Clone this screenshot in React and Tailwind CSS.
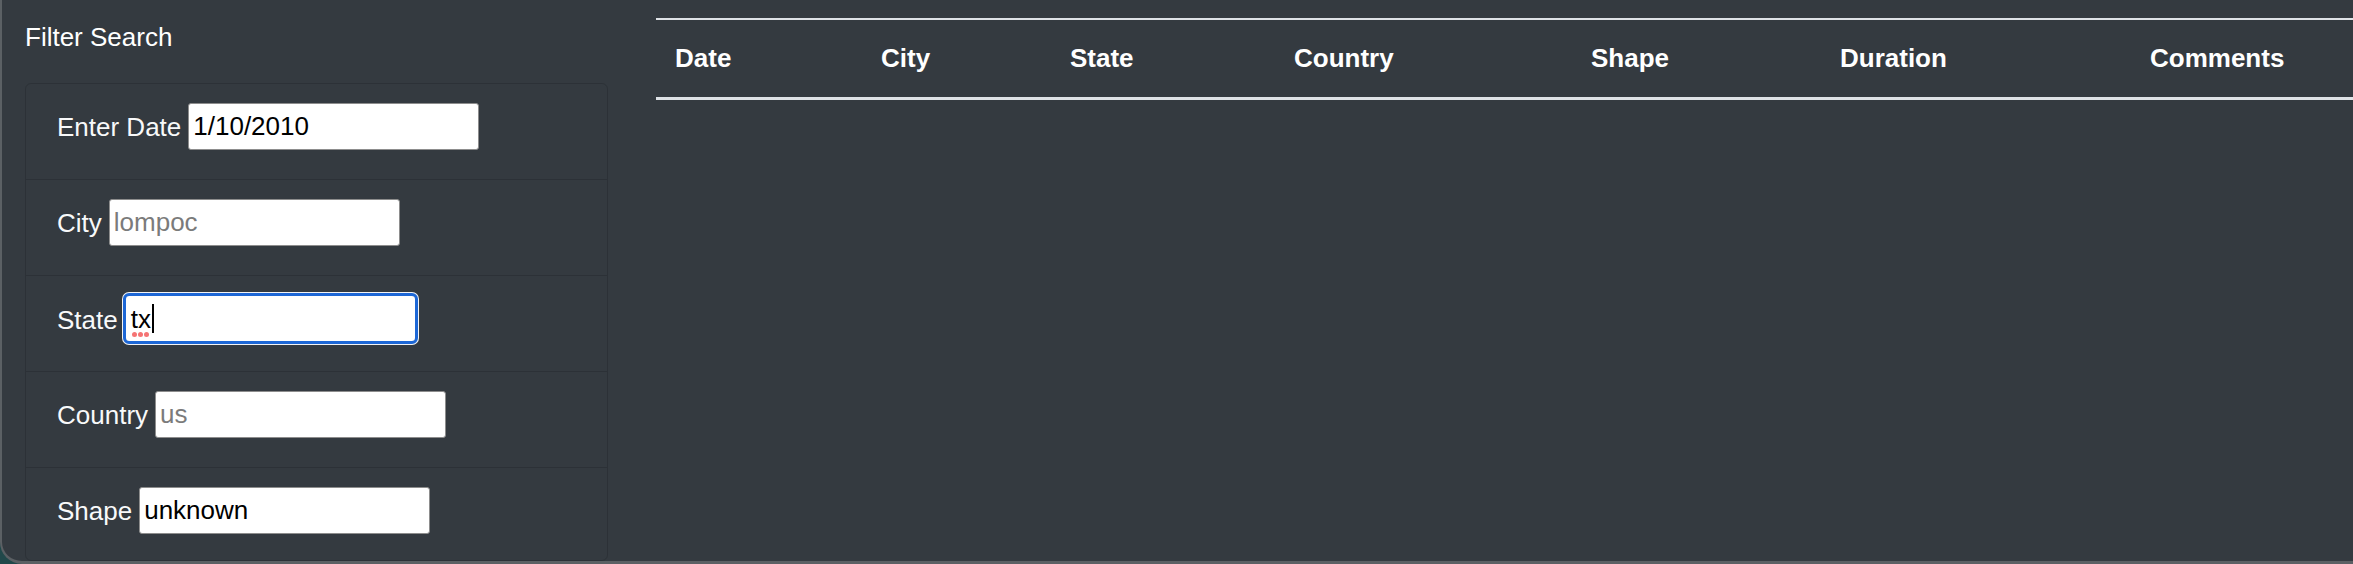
import React from 'react'

const fields = [
  { label: 'Enter Date', value: '1/10/2010' },
  { label: 'City', placeholder: 'lompoc' },
  { label: 'State', focused: true, value: 'tx' },
  { label: 'Country', placeholder: 'us' },
  { label: 'Shape', value: 'unknown' },
]

const columns = [
  { name: 'Date', w: 'w-[206px]' },
  { name: 'City', w: 'w-[189px]' },
  { name: 'State', w: 'w-[224px]' },
  { name: 'Country', w: 'w-[297px]' },
  { name: 'Shape', w: 'w-[249px]' },
  { name: 'Duration', w: 'w-[310px]' },
  { name: 'Comments', w: '' },
]

/* the focused field, drawn by hand so the caret and spell marks stay put */
function FocusedInput({ value }) {
  return (
    <div className="relative flex items-center w-[291px] h-[47px] px-[5px] bg-white border border-[#d8d8d8] rounded-[4px] shadow-[0_0_0_3px_#f4f4f4] outline-[3px] outline-solid outline-[#1d67d6] outline-offset-[-1px] text-black">
      <span className="relative leading-none">
        {value}
        <span className="absolute left-[1px] top-[26px] flex gap-[1px]">
          <span className="w-[5px] h-[5px] rounded-full bg-[#f57474]" />
          <span className="w-[5px] h-[5px] rounded-full bg-[#f57474]" />
          <span className="w-[5px] h-[5px] rounded-full bg-[#f57474]" />
        </span>
      </span>
      <span className="w-[2px] h-[29px] bg-black ml-[1px]" />
    </div>
  )
}

function FieldRow({ field, last }) {
  return (
    <div
      className={`flex items-baseline gap-[7px] pl-[31px] pt-[19px] shrink-0 ${
        last ? 'flex-1' : 'h-[96px] border-b border-black/[0.14]'
      }`}
    >
      <label className="text-[#f8f9fa] relative top-[1px]">{field.label}</label>
      {field.focused ? (
        <FocusedInput value={field.value} />
      ) : (
        <input
          readOnly
          defaultValue={field.value}
          placeholder={field.placeholder}
          className="w-[291px] h-[47px] px-[4px] bg-white text-black border border-[#8d8d8d] rounded-[3px] placeholder:text-[#7b7b7b] outline-none"
        />
      )}
    </div>
  )
}

export default function App() {
  return (
    <div className="w-[2353px] h-[564px] bg-[#21484a] overflow-hidden font-['Liberation_Sans',Arial,sans-serif] text-[26px] leading-[39px]">
      <div className="flex h-full bg-[#343a40] border-l-2 border-b-[3px] border-[#5b6064] rounded-bl-[22px] overflow-hidden">

        {/* filter panel */}
        <div className="w-[630px] shrink-0 flex flex-col pl-[23px] pt-[18px]">
          <h2 className="text-white mb-[26px]">Filter Search</h2>

          <div className="w-[583px] flex-1 min-h-0 flex flex-col border border-black/[0.14] rounded-[6px] overflow-hidden">
            {fields.map((f, i) => (
              <FieldRow key={f.label} field={f} last={i === fields.length - 1} />
            ))}
          </div>
        </div>

        {/* results table */}
        <div className="flex-1 pl-[24px] pt-[18px]">
          <table className="w-full table-fixed">
            <colgroup>
              {columns.map((c) => (
                <col key={c.name} className={c.w} />
              ))}
            </colgroup>
            <thead>
              <tr>
                {columns.map((c) => (
                  <th
                    key={c.name}
                    className="text-left font-bold text-white px-[19px] py-[19px] border-t-2 border-b-[3px] border-[#dee2e6]"
                  >
                    {c.name}
                  </th>
                ))}
              </tr>
            </thead>
            <tbody />
          </table>
        </div>

      </div>
    </div>
  )
}
